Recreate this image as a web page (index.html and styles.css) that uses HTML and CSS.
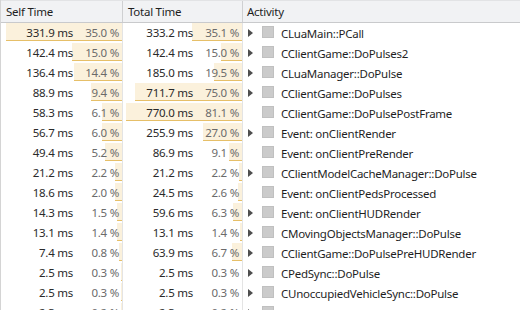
FILE: index.html
```html
<!DOCTYPE html>
<html>
<head>
<meta charset="utf-8">
<link rel="stylesheet" href="styles.css">
</head>
<body>
<div class="table">
  <div class="row head">
    <div class="hcell">Self Time</div>
    <div class="hcell">Total Time</div>
    <div class="hcell act-h">Activity</div>
  </div>

  <div class="row">
    <div class="cell c1"><div class="bar" style="--w:116px"><span class="ms">331.9 ms</span><span class="pct">35.0 %</span></div></div>
    <div class="cell c2"><div class="bar" style="--w:50px"><span class="ms">333.2 ms</span><span class="pct">35.1 %</span></div></div>
    <div class="act"><span class="exp"></span><span class="chk"></span><span class="name">CLuaMain::PCall</span></div>
  </div>
  <div class="row">
    <div class="cell c1"><div class="bar" style="--w:50px"><span class="ms">142.4 ms</span><span class="pct">15.0 %</span></div></div>
    <div class="cell c2"><div class="bar" style="--w:21px"><span class="ms">142.4 ms</span><span class="pct">15.0 %</span></div></div>
    <div class="act"><span class="exp"></span><span class="chk"></span><span class="name">CClientGame::DoPulses2</span></div>
  </div>
  <div class="row">
    <div class="cell c1"><div class="bar" style="--w:48px"><span class="ms">136.4 ms</span><span class="pct">14.4 %</span></div></div>
    <div class="cell c2"><div class="bar" style="--w:28px"><span class="ms">185.0 ms</span><span class="pct">19.5 %</span></div></div>
    <div class="act"><span class="exp"></span><span class="chk"></span><span class="name">CLuaManager::DoPulse</span></div>
  </div>
  <div class="row">
    <div class="cell c1"><div class="bar" style="--w:31px"><span class="ms">88.9 ms</span><span class="pct">9.4 %</span></div></div>
    <div class="cell c2"><div class="bar" style="--w:107px"><span class="ms">711.7 ms</span><span class="pct">75.0 %</span></div></div>
    <div class="act"><span class="exp"></span><span class="chk"></span><span class="name">CClientGame::DoPulses</span></div>
  </div>
  <div class="row">
    <div class="cell c1"><div class="bar" style="--w:20px"><span class="ms">58.3 ms</span><span class="pct">6.1 %</span></div></div>
    <div class="cell c2"><div class="bar" style="--w:116px"><span class="ms">770.0 ms</span><span class="pct">81.1 %</span></div></div>
    <div class="act"><span class="exp none"></span><span class="chk"></span><span class="name">CClientGame::DoPulsePostFrame</span></div>
  </div>
  <div class="row">
    <div class="cell c1"><div class="bar" style="--w:20px"><span class="ms">56.7 ms</span><span class="pct">6.0 %</span></div></div>
    <div class="cell c2"><div class="bar" style="--w:39px"><span class="ms">255.9 ms</span><span class="pct">27.0 %</span></div></div>
    <div class="act"><span class="exp"></span><span class="chk"></span><span class="name">Event: onClientRender</span></div>
  </div>
  <div class="row">
    <div class="cell c1"><div class="bar" style="--w:17px"><span class="ms">49.4 ms</span><span class="pct">5.2 %</span></div></div>
    <div class="cell c2"><div class="bar" style="--w:13px"><span class="ms">86.9 ms</span><span class="pct">9.1 %</span></div></div>
    <div class="act"><span class="exp none"></span><span class="chk"></span><span class="name">Event: onClientPreRender</span></div>
  </div>
  <div class="row">
    <div class="cell c1"><div class="bar" style="--w:7px"><span class="ms">21.2 ms</span><span class="pct">2.2 %</span></div></div>
    <div class="cell c2"><div class="bar" style="--w:3px"><span class="ms">21.2 ms</span><span class="pct">2.2 %</span></div></div>
    <div class="act"><span class="exp"></span><span class="chk"></span><span class="name">CClientModelCacheManager::DoPulse</span></div>
  </div>
  <div class="row">
    <div class="cell c1"><div class="bar" style="--w:7px"><span class="ms">18.6 ms</span><span class="pct">2.0 %</span></div></div>
    <div class="cell c2"><div class="bar" style="--w:4px"><span class="ms">24.5 ms</span><span class="pct">2.6 %</span></div></div>
    <div class="act"><span class="exp none"></span><span class="chk"></span><span class="name">Event: onClientPedsProcessed</span></div>
  </div>
  <div class="row">
    <div class="cell c1"><div class="bar" style="--w:5px"><span class="ms">14.3 ms</span><span class="pct">1.5 %</span></div></div>
    <div class="cell c2"><div class="bar" style="--w:9px"><span class="ms">59.6 ms</span><span class="pct">6.3 %</span></div></div>
    <div class="act"><span class="exp"></span><span class="chk"></span><span class="name">Event: onClientHUDRender</span></div>
  </div>
  <div class="row">
    <div class="cell c1"><div class="bar" style="--w:5px"><span class="ms">13.1 ms</span><span class="pct">1.4 %</span></div></div>
    <div class="cell c2"><div class="bar" style="--w:2px"><span class="ms">13.1 ms</span><span class="pct">1.4 %</span></div></div>
    <div class="act"><span class="exp"></span><span class="chk"></span><span class="name">CMovingObjectsManager::DoPulse</span></div>
  </div>
  <div class="row">
    <div class="cell c1"><div class="bar" style="--w:3px"><span class="ms">7.4 ms</span><span class="pct">0.8 %</span></div></div>
    <div class="cell c2"><div class="bar" style="--w:10px"><span class="ms">63.9 ms</span><span class="pct">6.7 %</span></div></div>
    <div class="act"><span class="exp"></span><span class="chk"></span><span class="name">CClientGame::DoPulsePreHUDRender</span></div>
  </div>
  <div class="row">
    <div class="cell c1"><div class="bar" style="--w:1px"><span class="ms">2.5 ms</span><span class="pct">0.3 %</span></div></div>
    <div class="cell c2"><div class="bar" style="--w:0px"><span class="ms">2.5 ms</span><span class="pct">0.3 %</span></div></div>
    <div class="act"><span class="exp"></span><span class="chk"></span><span class="name">CPedSync::DoPulse</span></div>
  </div>
  <div class="row">
    <div class="cell c1"><div class="bar" style="--w:1px"><span class="ms">2.5 ms</span><span class="pct">0.3 %</span></div></div>
    <div class="cell c2"><div class="bar" style="--w:0px"><span class="ms">2.5 ms</span><span class="pct">0.3 %</span></div></div>
    <div class="act"><span class="exp"></span><span class="chk"></span><span class="name">CUnoccupiedVehicleSync::DoPulse</span></div>
  </div>
  <div class="row">
    <div class="cell c1"><div class="bar" style="--w:1px"><span class="ms">2.3 ms</span><span class="pct">0.2 %</span></div></div>
    <div class="cell c2"><div class="bar" style="--w:0px"><span class="ms">2.3 ms</span><span class="pct">0.2 %</span></div></div>
    <div class="act"><span class="exp"></span><span class="chk"></span><span class="name">CLuaTimerManager::DoPulse</span></div>
  </div>
</div>
</body>
</html>
```
FILE: styles.css
```css
html, body {
  margin: 0;
  padding: 0;
  background: #ffffff;
  overflow: hidden;
}
body {
  font-family: "Noto Sans", "Open Sans", sans-serif;
  font-size: 11.5px;
  letter-spacing: -0.25px;
  color: #1f1f1f;
}
.table {
  border-left: 1px solid #d4d4d4;
  height: 310px;
  box-sizing: border-box;
}
.row {
  display: grid;
  grid-template-columns: 122px 120px 1fr;
  height: 20px;
}
.head {
  background: #f1f2f4;
  border-top: 1px solid #e2e3e5;
  border-bottom: 1px solid #c9cacc;
  box-sizing: content-box;
  height: 21px;
}
.hcell {
  padding-left: 5px;
  line-height: 21px;
  border-right: 1px solid #cfd0d2;
  color: #1e1e1e;
}
.hcell.act-h {
  border-right: none;
  padding-left: 4px;
}
.cell {
  border-right: 1px solid #e4e4e4;
}
.bar {
  --fill: #fbf1dc;
  --line: #e6bf68;
  display: flex;
  height: 18px;
  line-height: 19px;
  background:
    linear-gradient(var(--line), var(--line)) right bottom / var(--w) 1px no-repeat,
    linear-gradient(var(--fill), var(--fill)) right top / var(--w) 100% no-repeat;
}
.ms {
  text-align: right;
  color: #2a2a2a;
  white-space: nowrap;
}
.c1 .ms { width: 72px; }
.c2 .ms { width: 70px; }
.pct {
  flex: 1;
  text-align: right;
  padding-right: 3px;
  color: #6b6b6b;
  white-space: nowrap;
}
.act {
  display: flex;
  align-items: center;
  padding-left: 5px;
  height: 20px;
  white-space: nowrap;
}
.exp {
  width: 0;
  height: 0;
  border-left: 5px solid #4e4e4e;
  border-top: 4px solid transparent;
  border-bottom: 4px solid transparent;
  margin-right: 9px;
  margin-top: -1px;
}
.exp.none {
  border-left-color: transparent;
}
.chk {
  width: 12px;
  height: 12px;
  box-sizing: border-box;
  background: #cbcbcb;
  border: 1px solid #c0c0c0;
  margin-right: 7px;
  margin-top: -2px;
}
.name {
  color: #1f1f1f;
  line-height: 19px;
}
```
